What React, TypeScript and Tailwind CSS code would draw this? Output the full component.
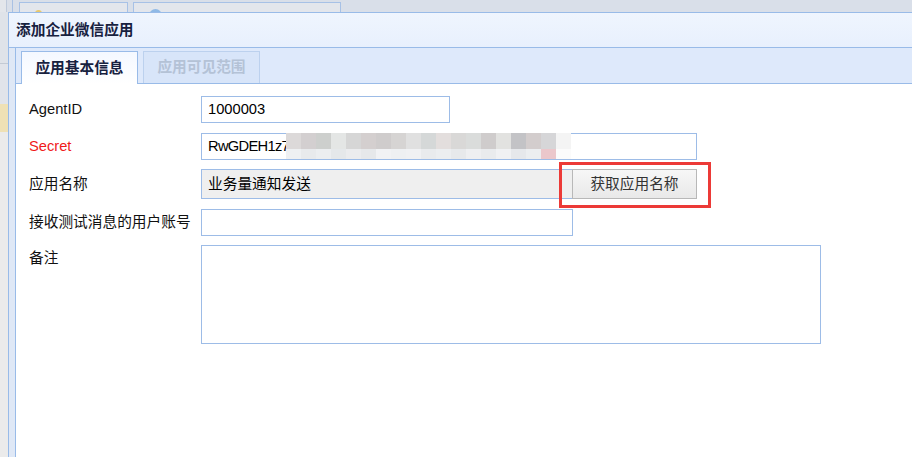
import React from 'react';

const mosaicTop = [
  '#dcd9d9', '#d3cfd0', '#cdcfcd', '#e4e6e5', '#d6d6d6', '#d4cfcf', '#cfcccc', '#d6d4d3', '#e0e0e0', '#d5d8d8',
  '#e3dedd', '#d9d8d7', '#dadcdb', '#cfcccc', '#e2e2e0', '#c3c3c6', '#d3cdcd', '#d6d6d8', '#f4f4f4',
];
const mosaicBottom = [
  '#eef0f2', '#e8eaec', '#eceef0', '#e5e8ea', '#ebecee', '#e6e8ea', '#f1f2f4', '#eef0f2', '#f0f1f3', '#e9ebed',
  '#eceef0', '#e7e9eb', '#eeeff1', '#e9ebed', '#f0f1f3', '#e6e8eb', '#eceef0', '#ebc7cb', '#fbfbfb',
];

const Label: React.FC<{ text: string; red?: boolean; top?: boolean }> = ({ text, red, top }) => (
  <div className={`w-[172px] shrink-0 ${top ? 'pt-[2px] self-start' : ''} ${red ? 'text-[#f01a1a]' : 'text-[#111]'}`}>
    {text}
  </div>
);

const App: React.FC = () => {
  return (
    <div className="relative w-[912px] h-[457px] overflow-hidden bg-[#ebebeb] font-['Liberation_Sans','Noto_Sans_CJK_SC',sans-serif] text-[14.7px]">
      {/* Background window tabs */}
      <div className="h-[12px] bg-[#d9dfe9] flex">
        <div className="w-[7px] h-full bg-[#e3e6eb] border-r border-[#bfcadb]" />
        <div className="w-[6px] h-full border-r border-[#a9c1e4]" />
        <div className="ml-[6px] mt-[2px] w-[109px] h-[12px] bg-[#e3e6ec] border border-[#a7c1e6] pl-[15px] pt-[7px]">
          <div className="w-[7px] h-[7px] rounded-full bg-[#e9c86c]" />
        </div>
        <div className="ml-[5px] mt-[2px] w-[208px] h-[12px] bg-[#e3e6ec] border border-[#a7c1e6] pl-[15px] pt-[6px]">
          <div className="w-[13px] h-[13px] rounded-full bg-[#8fb9e6]" />
        </div>
      </div>

      {/* Left background strip */}
      <div className="w-[8px] h-[445px] flex flex-col">
        <div className="h-[52px] bg-[#dfe3e9] border-b border-[#c3cad4]" />
        <div className="h-[40px] bg-[#e1e4ea]" />
        <div className="h-[28px] bg-[#efe1b5]" />
        <div className="flex-1 bg-[#ebebeb]" />
      </div>

      {/* Dialog window */}
      <div className="absolute left-[8px] top-[12px] w-[920px] h-[460px] border-l border-t border-[#99bbe8] flex flex-col bg-[#dfe8f6]">
        <div className="h-[35px] shrink-0 border-b border-[#99bbe8] bg-gradient-to-b from-[#eff5fe] to-[#e8f0fd] flex items-center pl-[7px] font-bold text-[#17213f]">
          添加企业微信应用
        </div>

        <div className="flex-1 pl-[6px] flex">
          <div className="flex-1 border-l border-[#99bbe8] flex flex-col bg-white">
            {/* Tab strip */}
            <div className="h-[36px] shrink-0 bg-[#dee9fb] border-b border-[#99bbe8] flex items-end pl-[5px] gap-[5px]">
              <div className="w-[117px] h-[33px] -mb-px border-t border-l border-r border-[#99bbe8] bg-gradient-to-b from-[#f4f8ff] to-white flex items-center justify-center font-bold text-[#17213f]">
                应用基本信息
              </div>
              <div className="w-[117px] h-[32px] border-t border-l border-r border-[#bcd1ee] bg-[#d8e5f9] flex items-center justify-center font-bold text-[#b4c2d6]">
                应用可见范围
              </div>
            </div>

            {/* Form */}
            <div className="pl-[13px] pt-[12px] flex flex-col">
              <div className="flex items-center">
                <Label text="AgentID" />
                <div className="w-[249px] h-[27px] border border-[#9dbce7] flex items-center pl-[6px] text-black">1000003</div>
              </div>

              <div className="flex items-center mt-[10px]">
                <Label text="Secret" red />
                <div className="relative w-[496px] h-[27px] border border-[#9dbce7] flex items-center pl-[6px] text-black tracking-[-0.7px]">
                  RwGDEH1z7
                  <div className="absolute left-[84px] top-[-1px] flex flex-col">
                    <div className="flex h-[16px]">
                      {mosaicTop.map((c, i) => (
                        <div key={i} className="w-[15px] h-full" style={{ backgroundColor: c }} />
                      ))}
                    </div>
                    <div className="flex h-[10px]">
                      {mosaicBottom.map((c, i) => (
                        <div key={i} className="w-[15px] h-full" style={{ backgroundColor: c }} />
                      ))}
                    </div>
                  </div>
                </div>
              </div>

              <div className="flex items-center mt-[9px]">
                <Label text="应用名称" />
                <div className="w-[371px] h-[30px] border border-[#9dbce7] border-r-0 bg-[#efefef] flex items-center pl-[6px] text-black">
                  业务量通知发送
                </div>
                <div className="relative">
                  <button className="w-[125px] h-[30px] border border-[#b8b8b8] bg-gradient-to-b from-[#f7f7f7] to-[#e9e9e9] text-[#333] text-[14.7px] flex items-center justify-center">
                    获取应用名称
                  </button>
                  <div className="absolute left-[-13px] top-[-7px] right-[-14px] bottom-[-9px] border-[3px] border-[#ec3a37] pointer-events-none" />
                </div>
              </div>

              <div className="flex items-center mt-[10px]">
                <Label text="接收测试消息的用户账号" />
                <div className="w-[372px] h-[27px] border border-[#9dbce7]" />
              </div>

              <div className="flex items-start mt-[9px]">
                <Label text="备注" top />
                <div className="w-[620px] h-[99px] border border-[#9dbce7]" />
              </div>
            </div>
          </div>
        </div>
      </div>
    </div>
  );
};

export default App;
